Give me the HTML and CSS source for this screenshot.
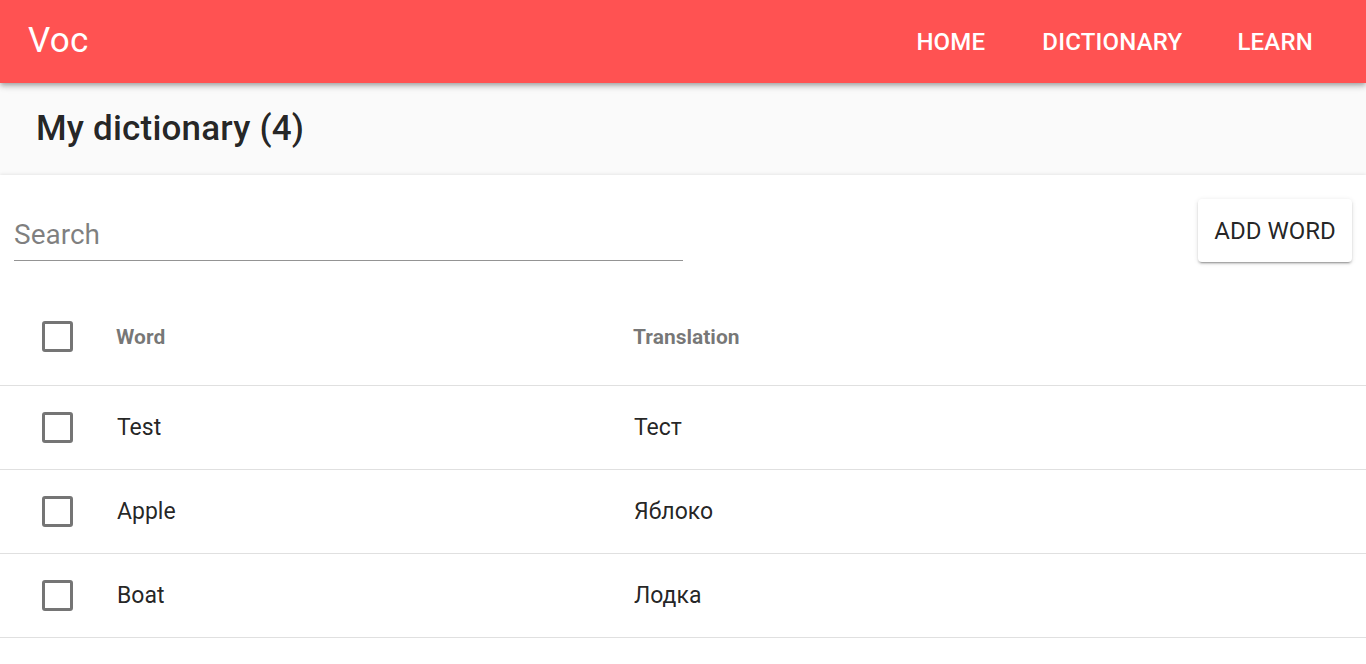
FILE: index.html
```html
<!DOCTYPE html>
<html>
<head>
<meta charset="utf-8">
<link rel="stylesheet" href="styles.css">
</head>
<body>
<header class="appbar">
  <div class="brand">Voc</div>
  <nav class="nav">
    <a class="nav-item">HOME</a>
    <a class="nav-item">DICTIONARY</a>
    <a class="nav-item">LEARN</a>
  </nav>
</header>
<div class="titlebar">
  <h1 class="title">My dictionary (4)</h1>
</div>
<main class="paper">
  <div class="toolbar">
    <div class="search">Search</div>
    <button class="add-btn">ADD WORD</button>
  </div>
  <div class="table">
    <div class="row head">
      <div class="cell check"><span class="box"></span></div>
      <div class="cell">Word</div>
      <div class="cell">Translation</div>
    </div>
    <div class="row">
      <div class="cell check"><span class="box"></span></div>
      <div class="cell">Test</div>
      <div class="cell">Тест</div>
    </div>
    <div class="row">
      <div class="cell check"><span class="box"></span></div>
      <div class="cell">Apple</div>
      <div class="cell">Яблоко</div>
    </div>
    <div class="row">
      <div class="cell check"><span class="box"></span></div>
      <div class="cell">Boat</div>
      <div class="cell">Лодка</div>
    </div>
    <div class="row">
      <div class="cell check"><span class="box"></span></div>
      <div class="cell"></div>
      <div class="cell"></div>
    </div>
  </div>
</main>
</body>
</html>
```
FILE: styles.css
```css
* { box-sizing: border-box; }
html, body { margin: 0; padding: 0; }
body {
  font-family: Roboto, "Liberation Sans", sans-serif;
  background: #fafafa;
  color: rgba(0,0,0,0.87);
  overflow: hidden;
  height: 664px;
}
.appbar {
  position: relative;
  z-index: 2;
  height: 83px;
  background: #ff5252;
  color: #fff;
  display: flex;
  align-items: center;
  justify-content: space-between;
  padding: 0 27px 0 28px;
  box-shadow: 0 2px 4px -1px rgba(0,0,0,0.2), 0 4px 5px 0 rgba(0,0,0,0.14), 0 1px 10px 0 rgba(0,0,0,0.12);
}
.brand {
  font-size: 35px;
  font-weight: 400;
  line-height: 1;
  padding-bottom: 2px;
  letter-spacing: 0.3px;
}
.nav { display: flex; }
.nav-item {
  font-size: 24px;
  font-weight: 500;
  padding: 0 27px;
  line-height: 1;
  letter-spacing: 0.2px;
}
.nav-item:first-child { padding-right: 30px; }
.nav-item:nth-child(2) { padding-right: 27px; }
.nav-item:last-child { padding-left: 28px; padding-right: 26px; }
.titlebar {
  height: 92px;
  display: flex;
  align-items: center;
  padding-left: 36px;
  background: #fafafa;
}
.title {
  margin: 0;
  font-size: 35px;
  font-weight: 500;
  color: rgba(0,0,0,0.87);
  line-height: 1;
  padding-bottom: 2px;
  letter-spacing: 0.2px;
}
.paper {
  background: #fff;
  box-shadow: 0 -1px 3px rgba(0,0,0,0.08);
  height: 489px;
}
.toolbar {
  display: flex;
  justify-content: space-between;
  align-items: flex-end;
  padding: 24px 14px 0 14px;
}
.search {
  width: 669px;
  font-size: 28px;
  color: rgba(0,0,0,0.5);
  border-bottom: 1px solid #949494;
  padding-bottom: 8px;
  padding-top: 1px;
  line-height: 1.2;
}
.add-btn {
  font-family: Roboto, "Liberation Sans", sans-serif;
  font-size: 24px;
  font-weight: 400;
  color: rgba(0,0,0,0.87);
  background: #fff;
  border: none;
  border-radius: 4px;
  width: 154px;
  height: 63px;
  padding: 0;
  margin-bottom: -1px;
  box-shadow: 0 3px 1px -2px rgba(0,0,0,0.2), 0 2px 2px 0 rgba(0,0,0,0.14), 0 1px 5px 0 rgba(0,0,0,0.12);
}
.table { margin-top: 27px; }
.row {
  display: grid;
  grid-template-columns: 100px 517px 1fr;
  align-items: center;
  height: 84px;
  border-bottom: 1px solid #e0e0e0;
  font-size: 23px;
}
.row .cell:not(.check) { padding-left: 17px; }
.row.head {
  height: 98px;
  font-size: 21px;
  font-weight: 700;
  color: rgba(0,0,0,0.54);
}
.row.head .cell:not(.check) { padding-left: 16px; }
.cell.check { padding-left: 42px; display: flex; }
.box {
  display: block;
  width: 31px;
  height: 31px;
  border: 3px solid #757575;
  border-radius: 3px;
}
```
